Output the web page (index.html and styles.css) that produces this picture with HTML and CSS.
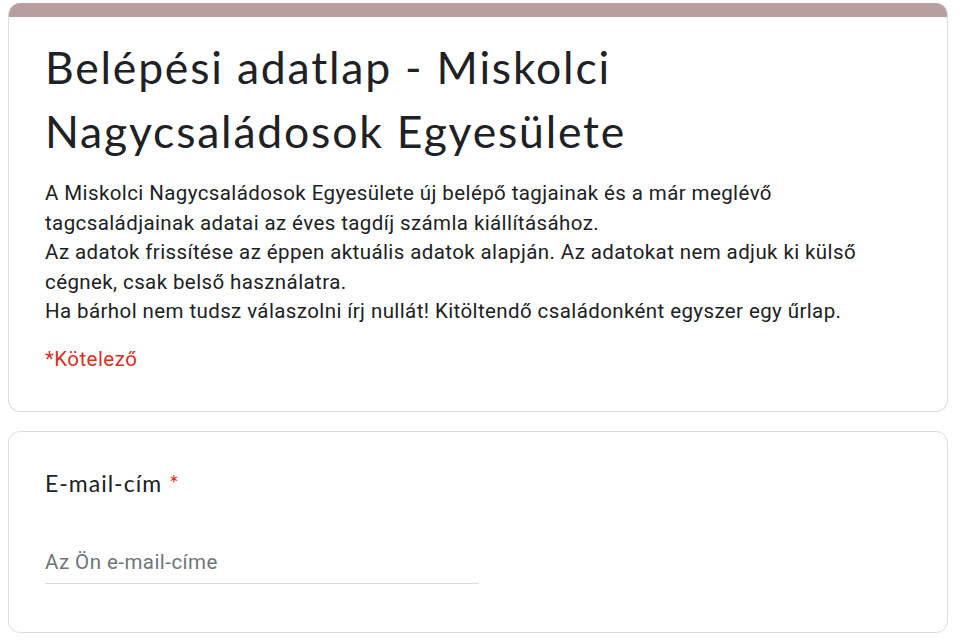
FILE: index.html
```html
<!DOCTYPE html>
<html lang="hu">
<head>
<meta charset="utf-8">
<title>Belépési adatlap - Miskolci Nagycsaládosok Egyesülete</title>
<link rel="stylesheet" href="styles.css">
</head>
<body>
<div class="page">
  <div class="card header-card">
    <div class="accent"></div>
    <div class="header-body">
      <h1 class="title">Belépési adatlap - Miskolci Nagycsaládosok Egyesülete</h1>
      <div class="desc">A Miskolci Nagycsaládosok Egyesülete új belépő tagjainak és a már meglévő tagcsaládjainak adatai az éves tagdíj számla kiállításához.<br>Az adatok frissítése az éppen aktuális adatok alapján. Az adatokat nem adjuk ki külső cégnek, csak belső használatra.<br>Ha bárhol nem tudsz válaszolni írj nullát! Kitöltendő családonként egyszer egy űrlap.</div>
      <div class="required-note">*Kötelező</div>
    </div>
  </div>
  <div class="card question-card">
    <div class="q-label">E-mail-cím <span class="star">*</span></div>
    <div class="q-input"><input type="email" placeholder="Az Ön e-mail-címe"></div>
  </div>
</div>
</body>
</html>
```
FILE: styles.css
```css
html, body {
  margin: 0;
  padding: 0;
  background: #ffffff;
}
.page {
  padding: 3px 12px 0 8px;
  display: flex;
  flex-direction: column;
  gap: 19px;
}
.card {
  background: #fff;
  border: 1px solid #dadce0;
  border-radius: 12px;
}
.header-card {
  border-top: none;
  overflow: hidden;
}
.accent {
  height: 14px;
  background: #b89e9e;
  margin: 0 -1px;
}
.header-body {
  padding: 18px 36px 37px 36px;
}
.title {
  margin: 0;
  font-family: "Lato", "Roboto", sans-serif;
  font-weight: 400;
  font-size: 44.5px;
  line-height: 64px;
  letter-spacing: 1.8px;
  color: #202124;
  max-width: 640px;
}
.desc {
  margin-top: 16px;
  font-family: "Roboto", sans-serif;
  font-size: 20.5px;
  line-height: 29.5px;
  letter-spacing: 0.4px;
  color: #202124;
}
.required-note {
  margin-top: 18px;
  font-family: "Roboto", sans-serif;
  font-size: 20.5px;
  line-height: 29px;
  letter-spacing: 0.45px;
  color: #d93025;
}
.question-card {
  padding: 35px 36px 48px 36px;
}
.q-label {
  font-family: "Lato", "Roboto", sans-serif;
  font-size: 23px;
  line-height: 32px;
  color: #202124;
  letter-spacing: 1px;
}
.star {
  color: #d93025;
}
.q-input {
  margin-top: 49px;
  width: 434px;
}
.q-input input {
  display: block;
  width: 100%;
  box-sizing: border-box;
  border: none;
  border-bottom: 1px solid #dadce0;
  outline: none;
  padding: 0 0 6px 0;
  margin: 0;
  font-family: "Roboto", sans-serif;
  font-size: 20.5px;
  letter-spacing: 0.45px;
  line-height: 29px;
  height: 36px;
  color: #202124;
  background: transparent;
}
.q-input input::placeholder {
  color: #70757a;
}
```
